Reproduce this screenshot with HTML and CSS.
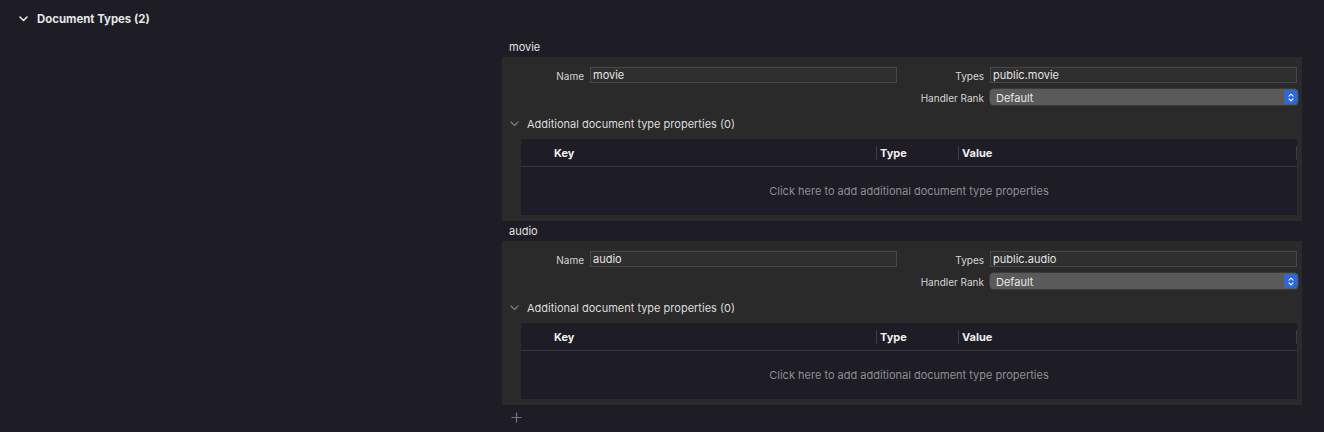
FILE: index.html
```html
<!DOCTYPE html>
<html>
<head>
<meta charset="utf-8">
<link rel="stylesheet" href="styles.css">
</head>
<body>
<div class="section-head">
  <svg class="chev" width="9" height="6" viewBox="0 0 9 6"><path d="M1 1l3.5 3.5L8 1" fill="none" stroke="#e6e6e6" stroke-width="1.6" stroke-linecap="round" stroke-linejoin="round"/></svg>
  <span>Document Types (2)</span>
</div>
<div class="content">
  <div class="doc">
    <div class="doc-title">movie</div>
    <div class="panel">
      <div class="form">
        <label class="lbl">Name</label>
        <div class="field">movie</div>
        <label class="lbl">Types</label>
        <div class="field types">public.movie</div>
        <span></span><span></span>
        <label class="lbl">Handler Rank</label>
        <div class="select"><span>Default</span><span class="stepper"><svg width="6" height="9" viewBox="0 0 6 9"><path d="M1 3.2L3 1.2 5 3.2M1 5.8L3 7.8 5 5.8" fill="none" stroke="#fff" stroke-width="1.1" stroke-linecap="round" stroke-linejoin="round"/></svg></span></div>
      </div>
      <div class="disclosure">
        <svg width="9" height="6" viewBox="0 0 9 6"><path d="M1 1l3.5 3.5L8 1" fill="none" stroke="#7b7b80" stroke-width="1.2" stroke-linecap="round" stroke-linejoin="round"/></svg>
        <span>Additional document type properties (0)</span>
      </div>
      <div class="table">
        <div class="thead">
          <div class="th key">Key</div>
          <div class="th type">Type</div>
          <div class="th value">Value</div>
        </div>
        <div class="tbody">Click here to add additional document type properties</div>
      </div>
    </div>
  </div>
  <div class="doc">
    <div class="doc-title">audio</div>
    <div class="panel">
      <div class="form">
        <label class="lbl">Name</label>
        <div class="field">audio</div>
        <label class="lbl">Types</label>
        <div class="field types">public.audio</div>
        <span></span><span></span>
        <label class="lbl">Handler Rank</label>
        <div class="select"><span>Default</span><span class="stepper"><svg width="6" height="9" viewBox="0 0 6 9"><path d="M1 3.2L3 1.2 5 3.2M1 5.8L3 7.8 5 5.8" fill="none" stroke="#fff" stroke-width="1.1" stroke-linecap="round" stroke-linejoin="round"/></svg></span></div>
      </div>
      <div class="disclosure">
        <svg width="9" height="6" viewBox="0 0 9 6"><path d="M1 1l3.5 3.5L8 1" fill="none" stroke="#7b7b80" stroke-width="1.2" stroke-linecap="round" stroke-linejoin="round"/></svg>
        <span>Additional document type properties (0)</span>
      </div>
      <div class="table">
        <div class="thead">
          <div class="th key">Key</div>
          <div class="th type">Type</div>
          <div class="th value">Value</div>
        </div>
        <div class="tbody">Click here to add additional document type properties</div>
      </div>
    </div>
  </div>
  <div class="add">
    <svg width="11" height="11" viewBox="0 0 11 11"><path d="M5.5 0.5v10M0.5 5.5h10" stroke="#77767c" stroke-width="1.2"/></svg>
  </div>
</div>
</body>
</html>
```

FILE: styles.css
```css
* { box-sizing: border-box; }
html, body {
  margin: 0;
  padding: 0;
  background: #1e1c25;
  font-family: Inter, "Liberation Sans", sans-serif;
  font-size: 11px;
  color: #dedede;
  width: 1324px;
  height: 432px;
  overflow: hidden;
}
.section-head {
  height: 37px;
  display: flex;
  align-items: center;
  padding-left: 19px;
  gap: 9px;
  font-weight: 700;
  color: #e6e6e6;
  font-size: 11.4px;
}
.content {
  margin-left: 502px;
  width: 800px;
}
.doc-title {
  height: 20px;
  display: flex;
  align-items: center;
  padding-left: 7px;
  color: #e2e2e2;
}
.panel {
  background: #2a2a2a;
  padding: 10px 5px 0 0;
  display: flex;
  flex-direction: column;
}
.form {
  display: grid;
  grid-template-columns: 82px 307px 81px 308px;
  grid-auto-rows: 16px;
  column-gap: 6px;
  row-gap: 6px;
}
.lbl {
  text-align: right;
  color: #d6d6d6;
  font-size: 10px;
  line-height: 16px;
  padding-top: 1px;
  white-space: nowrap;
}
.field {
  background: #2f2f2f;
  border: 1px solid #474747;
  color: #e4e4e4;
  padding: 1px 0 0 2px;
  line-height: 13px;
}
.field.types { margin-right: 1px; }
.select {
  background: #5a5a5a;
  border-radius: 4px;
  display: flex;
  align-items: center;
  justify-content: space-between;
  padding-left: 6px;
  padding-right: 1px;
  color: #e8e8e8;
  box-shadow: 0 0 0 0.5px #4a4a4a;
}
.select span:first-child { padding-top: 1px; }
.stepper {
  width: 13px;
  height: 14px;
  border-radius: 3px;
  background: #2b67e1;
  display: flex;
  align-items: center;
  justify-content: center;
}
.disclosure {
  height: 22px;
  margin-top: 8px;
  display: flex;
  align-items: center;
  padding-left: 8px;
  gap: 8px;
  color: #dcdcdc;
}
.table {
  margin: 4px 0 6px 19px;
  background: #1e1c25;
}
.thead {
  height: 28px;
  display: flex;
  align-items: center;
  border-bottom: 1px solid #38373d;
  font-weight: 700;
  color: #f0f0f0;
}
.th {
  height: 100%;
  display: flex;
  align-items: center;
}
.key { width: 355px; padding-left: 33px; }
.type { width: 82px; padding-left: 3px; border-left: 1px solid #3d3c42; height: 14px; }
.value { flex: 1; padding-left: 3px; border-left: 1px solid #3d3c42; border-right: 1px solid #3d3c42; height: 14px; }
.tbody {
  height: 48px;
  display: flex;
  align-items: center;
  justify-content: center;
  color: #8e8e92;
}
.add {
  height: 24px;
  display: flex;
  align-items: center;
  padding-left: 9px;
}
```
